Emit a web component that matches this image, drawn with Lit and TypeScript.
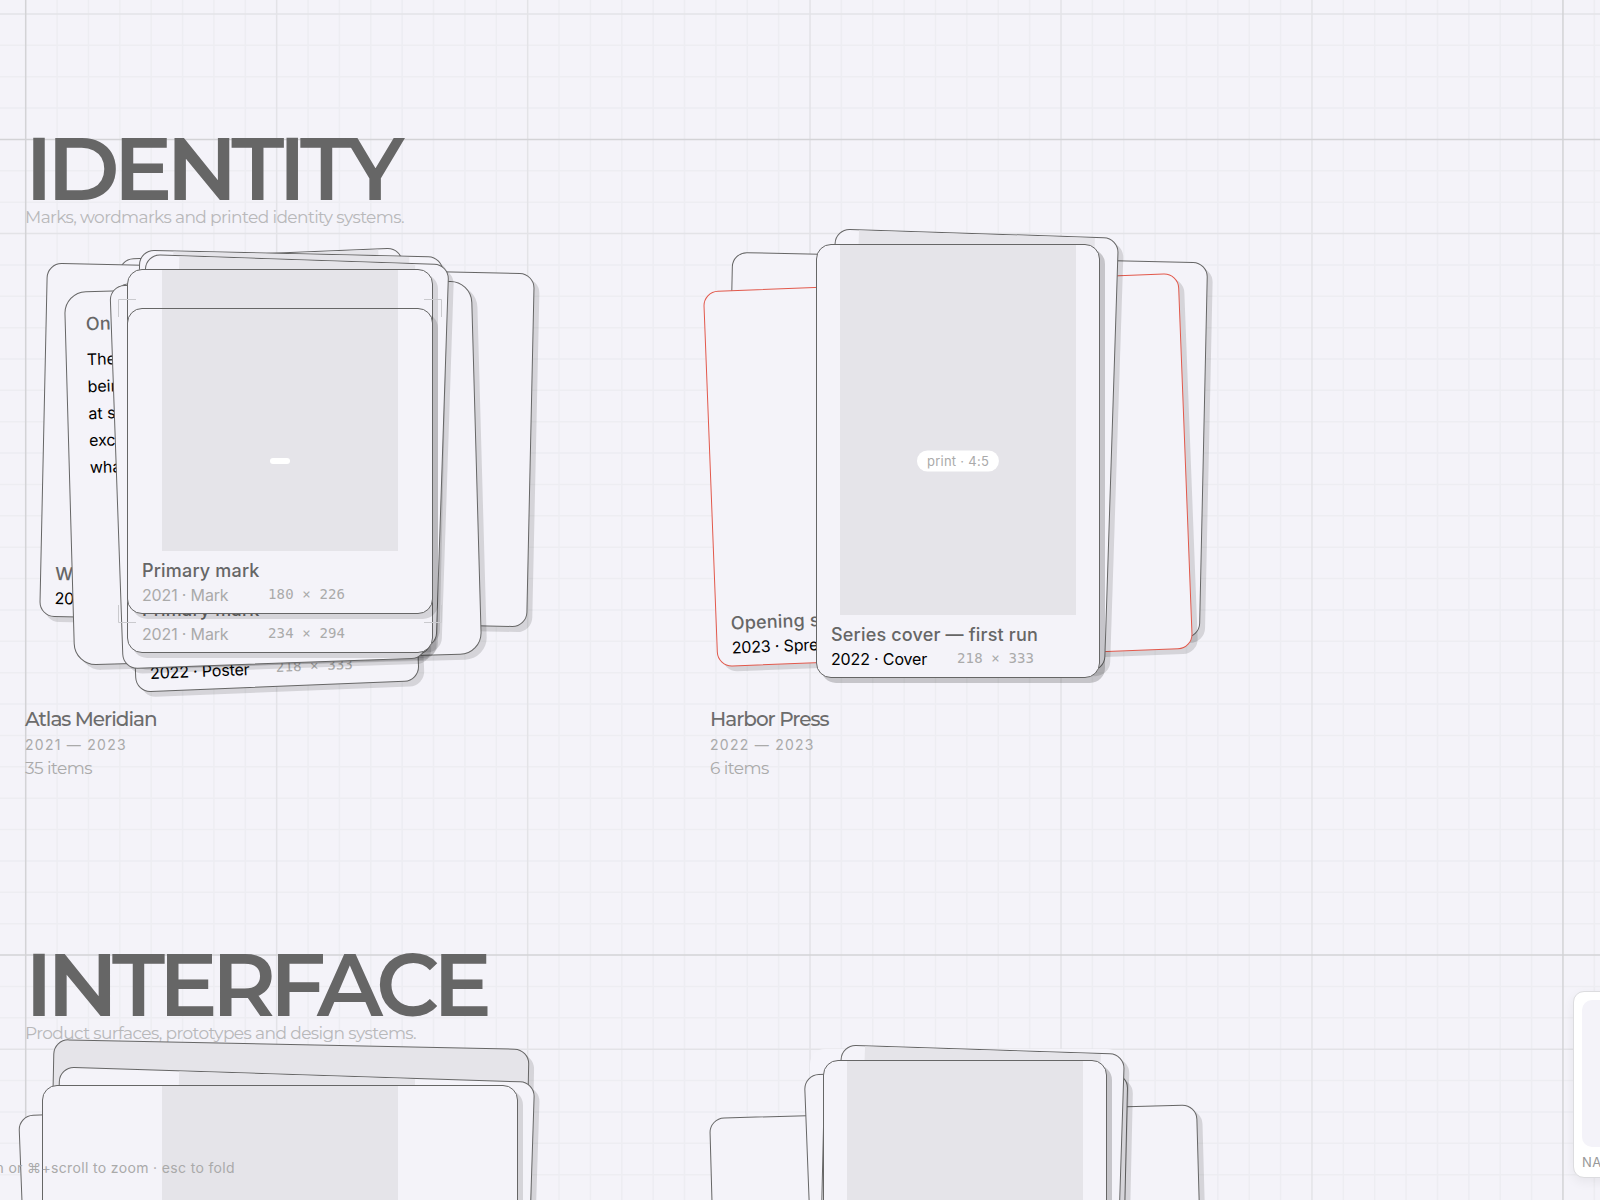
import { LitElement, html, svg, css, nothing } from "lit";
import { customElement, property } from "lit/decorators.js";
import { classMap } from "lit/directives/class-map.js";
import { styleMap } from "lit/directives/style-map.js";

interface CardData {
  /** centre of the card inside its stage */
  cx: number;
  cy: number;
  w: number;
  h: number;
  rot: number;
  title?: string;
  meta?: string;
  size?: string;
  media?: boolean;
  pill?: string;
  note?: string[];
  variant?: "accent" | "filled" | "ghost" | "note";
  lifted?: boolean;
  muted?: boolean;
}

interface StackData {
  name: string;
  years: string;
  count: string;
  selected?: { x: number; y: number; w: number; h: number };
  cards: CardData[];
}

interface SectionData {
  title: string;
  blurb: string;
  stacks: StackData[];
}

const sections: SectionData[] = [
  {
    title: "IDENTITY",
    blurb: "Marks, wordmarks and printed identity systems.",
    stacks: [
      {
        name: "Atlas Meridian",
        years: "2021 — 2023",
        count: "35 items",
        selected: { x: 93, y: 70, w: 324, h: 324 },
        cards: [
          { cx: 244, cy: 241, w: 284, h: 434, rot: -2.3, media: true, title: "Poster", meta: "2022 · Poster", size: "218 × 333" },
          { cx: 262, cy: 216, w: 488, h: 354, rot: 1.25, title: "Wall", meta: "2023" },
          { cx: 248, cy: 244, w: 408, h: 374, rot: -1.6, variant: "note", title: "On", note: ["The", "being", "at size", "except", "what"] },
          { cx: 262, cy: 216, w: 304, h: 384, rot: 1.3, media: true },
          { cx: 248, cy: 240, w: 304, h: 382, rot: -2.1 },
          { cx: 243, cy: 243, w: 304, h: 384, rot: -2 },
          { cx: 266, cy: 222, w: 304, h: 384, rot: 1.9, media: true },
          { cx: 255, cy: 232, w: 306, h: 384, rot: 0, media: true, muted: true, title: "Primary mark", meta: "2021 · Mark", size: "234 × 294" },
          { cx: 255, cy: 232, w: 306, h: 306, rot: 0, media: true, muted: true, pill: "", title: "Primary mark", meta: "2021 · Mark", size: "180 × 226" },
        ],
      },
      {
        name: "Harbor Press",
        years: "2022 — 2023",
        count: "6 items",
        cards: [
          { cx: 256, cy: 216, w: 476, h: 376, rot: 1.25 },
          { cx: 238, cy: 241, w: 476, h: 376, rot: -2.2, variant: "accent", title: "Opening spread", meta: "2023 · Spread" },
          { cx: 260, cy: 221, w: 284, h: 434, rot: 1.85, media: true },
          { cx: 248, cy: 232, w: 284, h: 434, rot: 0, media: true, lifted: true, pill: "print · 4:5", title: "Series cover — first run", meta: "2022 · Cover", size: "218 × 333" },
        ],
      },
    ],
  },
  {
    title: "INTERFACE",
    blurb: "Product surfaces, prototypes and design systems.",
    stacks: [
      {
        name: "",
        years: "",
        count: "",
        cards: [
          { cx: 238, cy: 243, w: 476, h: 364, rot: -2.2 },
          { cx: 262, cy: 216, w: 476, h: 434, rot: 1.2, variant: "filled" },
          { cx: 266, cy: 221, w: 476, h: 384, rot: 1.85, media: true },
          { cx: 255, cy: 232, w: 476, h: 384, rot: 0, media: true },
        ],
      },
      {
        name: "",
        years: "",
        count: "",
        cards: [
          { cx: 256, cy: 254, w: 312, h: 500, rot: 0, variant: "ghost" },
          { cx: 248, cy: 243, w: 488, h: 354, rot: -1.6 },
          { cx: 244, cy: 241, w: 284, h: 434, rot: -2.2 },
          { cx: 262, cy: 216, w: 304, h: 382, rot: 1.3 },
          { cx: 266, cy: 221, w: 284, h: 434, rot: 1.85, media: true },
          { cx: 255, cy: 232, w: 284, h: 434, rot: 0, media: true, lifted: true },
        ],
      },
    ],
  },
];

const CELL = 31.3725;
const ORIGIN_X = 25.7;
const ORIGIN_Y = 13.9;
const COLUMN_LINES = new Set([8, 16, 25, 33, 41]);
const COLUMN_EDGES = new Set([0, 49]);
const ROW_LINES = new Set([0, 7, 33]);
const ROW_EDGES = new Set([4, 30]);

const UI = css`Inter, "Liberation Sans", sans-serif`;
const DISPLAY = css`Montserrat, Inter, "Liberation Sans", sans-serif`;
const MONO = css`"DejaVu Sans Mono", "Liberation Mono", monospace`;

@customElement("canvas-grid")
export class CanvasGrid extends LitElement {
  static styles = css`
    :host {
      display: block;
      position: absolute;
      inset: 0;
    }
    svg {
      display: block;
      width: 100%;
      height: 100%;
    }
    line {
      stroke: #ededf2;
      stroke-width: 1.5;
    }
    .major {
      stroke: #e3e3e7;
      stroke-width: 1.5;
    }
    .edge {
      stroke: #d3d3d6;
      stroke-width: 1.5;
    }
  `;

  private kind(i: number, edges: Set<number>, majors: Set<number>) {
    return edges.has(i) ? "edge" : majors.has(i) ? "major" : "minor";
  }

  render() {
    const order = ["minor", "major", "edge"];
    const lines: { kind: string; tpl: unknown }[] = [];
    for (let i = 0; i < 100; i++) {
      const x = ORIGIN_X + i * CELL;
      const y = ORIGIN_Y + i * CELL;
      const cx = this.kind(i, COLUMN_EDGES, COLUMN_LINES);
      const cy = this.kind(i, ROW_EDGES, ROW_LINES);
      lines.push({ kind: cx, tpl: svg`<line class=${cx} x1=${x} x2=${x} y1="0" y2="100%"></line>` });
      lines.push({ kind: cy, tpl: svg`<line class=${cy} y1=${y} y2=${y} x1="0" x2="100%"></line>` });
    }
    lines.sort((a, b) => order.indexOf(a.kind) - order.indexOf(b.kind));
    return html`<svg aria-hidden="true">${lines.map((l) => l.tpl)}</svg>`;
  }
}

@customElement("stack-card")
export class StackCard extends LitElement {
  @property({ attribute: false }) data!: CardData;

  static styles = css`
    :host {
      display: block;
      font-family: ${UI};
    }
    .card {
      box-sizing: border-box;
      position: relative;
      display: flex;
      flex-direction: column;
      height: 100%;
      border: 1px solid #666;
      border-radius: 15px;
      background: #f4f3f9;
      box-shadow: 5px 5px 0 rgba(0, 0, 0, 0.125);
      overflow: hidden;
    }
    .lifted {
      box-shadow: 5px 5px 0 rgba(0, 0, 0, 0.19);
    }
    .accent {
      border-color: #e2594c;
    }
    .filled {
      background: #e5e4e9;
    }
    .ghost {
      border-color: transparent;
      background: #f5f4fa;
      box-shadow: none;
    }
    .note {
      border-radius: 22px;
      padding: 20px;
    }
    .media {
      flex: 1;
      display: flex;
      justify-content: center;
    }
    .swatch {
      width: 236px;
      background: #e5e4e9;
    }
    .footer {
      display: grid;
      grid-template-columns: 126px 1fr;
      row-gap: 2px;
      padding: 8px 14px;
      min-height: 46px;
    }
    .title {
      grid-column: 1 / -1;
      margin: 0;
      font-size: 18px;
      line-height: 24px;
      font-weight: 500;
      letter-spacing: 0.01em;
      color: #666;
      white-space: nowrap;
    }
    .meta {
      font-size: 16px;
      line-height: 20px;
      letter-spacing: -0.01em;
      color: #000;
      white-space: nowrap;
    }
    .size {
      font-family: ${MONO};
      font-size: 14px;
      line-height: 18px;
      letter-spacing: 0.01em;
      color: #aaa;
      white-space: nowrap;
    }
    .muted .meta {
      color: #aaa;
    }
    .line {
      display: block;
      font-size: 16px;
      line-height: 27px;
    }
    .body {
      margin: 10px 0 0;
    }
    .pill {
      position: absolute;
      top: 50%;
      left: 50%;
      transform: translate(-50%, -50%);
      padding: 3px 10px;
      border-radius: 12px;
      background: #fff;
      color: #aaa;
      font-size: 13px;
      line-height: 15px;
      letter-spacing: 0.02em;
      white-space: nowrap;
    }
  `;

  render() {
    const d = this.data;
    const cls = classMap({
      card: true,
      accent: d.variant === "accent",
      filled: d.variant === "filled",
      ghost: d.variant === "ghost",
      note: d.variant === "note",
      lifted: !!d.lifted,
      muted: !!d.muted,
    });
    if (d.note) {
      return html`<article class=${cls}>
        <h3 class="title">${d.title}</h3>
        <p class="body">${d.note.map((l) => html`<span class="line">${l}</span>`)}</p>
      </article>`;
    }
    return html`<article class=${cls}>
      <div class="media">${d.media ? html`<div class="swatch"></div>` : nothing}</div>
      <div class="footer">
        ${d.title ? html`<h3 class="title">${d.title}</h3>` : nothing}
        ${d.meta ? html`<span class="meta">${d.meta}</span>` : nothing}
        ${d.size ? html`<span class="size">${d.size}</span>` : nothing}
      </div>
      ${d.pill !== undefined ? html`<span class="pill">${d.pill}</span>` : nothing}
    </article>`;
  }
}

@customElement("card-stack")
export class CardStack extends LitElement {
  @property({ attribute: false }) data!: StackData;

  static styles = css`
    :host {
      display: block;
    }
    .stage {
      position: relative;
      height: 475px;
    }
    .slot {
      position: absolute;
    }
    .brackets {
      position: absolute;
      fill: none;
      stroke: #cacace;
      stroke-width: 1;
    }
    .label {
      display: flex;
      flex-direction: column;
      font-family: ${DISPLAY};
      min-height: 76px;
    }
    .name {
      margin: 0;
      font-size: 20px;
      line-height: 30px;
      font-weight: 500;
      letter-spacing: -0.05em;
      color: #6c6c6c;
    }
    .years {
      font-family: ${UI};
      font-size: 14px;
      line-height: 22px;
      letter-spacing: 0.09em;
      color: #aaa;
    }
    .count {
      font-size: 17px;
      line-height: 24px;
      font-weight: 400;
      letter-spacing: -0.03em;
      color: #aaa;
    }
  `;

  private brackets(b: { x: number; y: number; w: number; h: number }) {
    const a = 18;
    const { w, h } = b;
    const d = `M.5 ${a}V.5H${a}M${w - a} .5H${w - 0.5}V${a}M${w - 0.5} ${h - a}V${h - 0.5}H${w - a}M${a} ${h - 0.5}H.5V${h - a}`;
    return html`<svg
      class="brackets"
      aria-hidden="true"
      width=${w}
      height=${h}
      style=${styleMap({ left: `${b.x}px`, top: `${b.y}px` })}
    ><path d=${d}></path></svg>`;
  }

  render() {
    const s = this.data;
    return html`
      <div class="stage">
        ${s.cards.map(
          (c) => html`<stack-card
            class="slot"
            .data=${c}
            style=${styleMap({
              left: `${c.cx - c.w / 2}px`,
              top: `${c.cy - c.h / 2}px`,
              width: `${c.w}px`,
              height: `${c.h}px`,
              transform: c.rot ? `rotate(${c.rot}deg)` : "none",
            })}
          ></stack-card>`
        )}
        ${s.selected ? this.brackets(s.selected) : nothing}
      </div>
      <div class="label">
        ${s.name
          ? html`<h2 class="name">${s.name}</h2>
              <span class="years">${s.years}</span>
              <span class="count">${s.count}</span>`
          : nothing}
      </div>
    `;
  }
}

@customElement("app-root")
export class AppRoot extends LitElement {
  static styles = css`
    :host {
      display: block;
      position: relative;
      height: 100vh;
      overflow: hidden;
      background: #f4f3f9;
      font-family: ${UI};
    }
    .board {
      position: relative;
      display: flex;
      flex-direction: column;
      gap: 173px;
      padding: 137px 0 0 25px;
    }
    .heading {
      margin: 0;
      font-family: ${DISPLAY};
      font-size: 88px;
      line-height: 64px;
      font-weight: 600;
      letter-spacing: -0.07em;
      color: #666;
    }
    .blurb {
      margin: 4px 0 0;
      font-family: ${DISPLAY};
      font-size: 17px;
      line-height: 24px;
      font-weight: 400;
      letter-spacing: -0.035em;
      color: #b8b8ba;
    }
    .row {
      display: grid;
      grid-template-columns: repeat(2, 685px);
    }
    .hint {
      position: absolute;
      right: calc(100% - 235px);
      bottom: 20px;
      margin: 0;
      font-size: 14px;
      line-height: 24px;
      letter-spacing: 0.025em;
      color: #aaa;
      white-space: nowrap;
    }
    .map {
      position: absolute;
      right: -205px;
      bottom: 22px;
      box-sizing: border-box;
      width: 232px;
      display: flex;
      flex-direction: column;
      gap: 8px;
      padding: 8px;
      border: 1px solid #dcdcdf;
      border-radius: 11px;
      background: #fff;
      box-shadow: 0 4px 12px rgba(0, 0, 0, 0.06);
    }
    .world {
      height: 147px;
      border-radius: 10px;
      background: #f4f3f9;
    }
    .caption {
      font-size: 13px;
      line-height: 14px;
      letter-spacing: 0.04em;
      color: #999;
    }
  `;

  render() {
    return html`
      <canvas-grid></canvas-grid>
      <main class="board">
        ${sections.map(
          (s) => html`<section>
            <h1 class="heading">${s.title}</h1>
            <p class="blurb">${s.blurb}</p>
            <div class="row">
              ${s.stacks.map((k) => html`<card-stack .data=${k}></card-stack>`)}
            </div>
          </section>`
        )}
      </main>
      <p class="hint">pinch or ⌘+scroll to zoom · esc to fold</p>
      <aside class="map">
        <div class="world"></div>
        <span class="caption">NAVIGATOR</span>
      </aside>
    `;
  }
}
